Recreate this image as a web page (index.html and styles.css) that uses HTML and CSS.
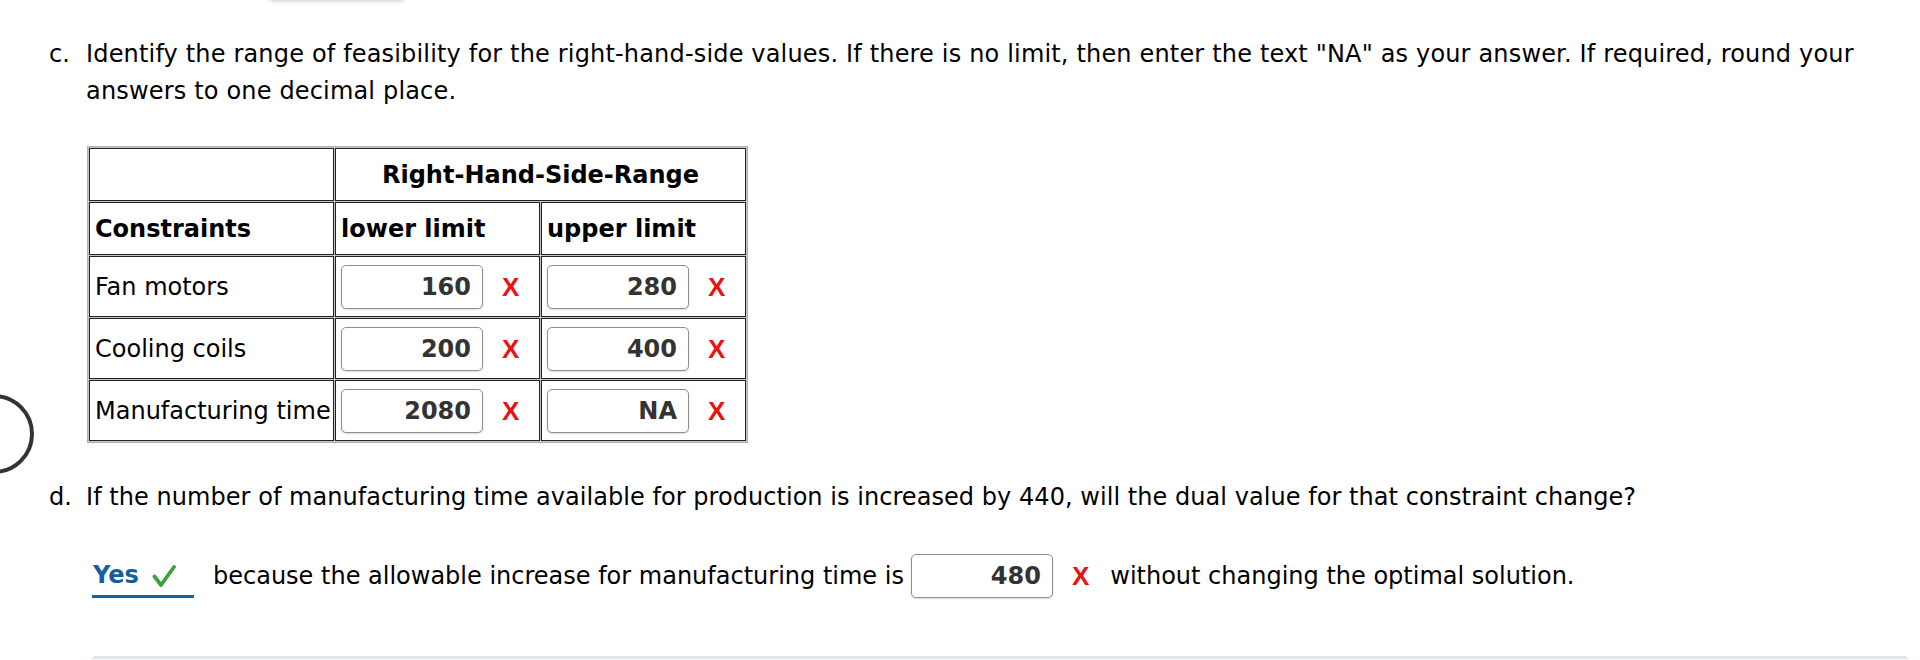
FILE: index.html
```html
<!DOCTYPE html>
<html>
<head>
<meta charset="utf-8">
<link rel="stylesheet" href="styles.css">
</head>
<body>
<div class="page">
  <div class="top-shadow"></div>
  <div class="side-circle"></div>

  <div class="q q-c">
    <div class="q-label">c.</div>
    <div class="q-body">Identify the range of feasibility for the right-hand-side values. If there is no limit, then enter the text "NA" as your answer. If required, round your answers to one decimal place.</div>
  </div>

  <div class="table-wrap">
    <table class="rhs">
      <colgroup>
        <col class="c1"><col class="c2"><col class="c3">
      </colgroup>
      <tr class="hrow">
        <td></td>
        <td colspan="2" class="center bold">Right-Hand-Side-Range</td>
      </tr>
      <tr class="hrow">
        <td class="bold">Constraints</td>
        <td class="bold">lower limit</td>
        <td class="bold">upper limit</td>
      </tr>
      <tr class="drow">
        <td>Fan motors</td>
        <td><div class="ans"><input class="box" type="text" value="160" readonly><span class="wrong">X</span></div></td>
        <td><div class="ans"><input class="box" type="text" value="280" readonly><span class="wrong">X</span></div></td>
      </tr>
      <tr class="drow">
        <td>Cooling coils</td>
        <td><div class="ans"><input class="box" type="text" value="200" readonly><span class="wrong">X</span></div></td>
        <td><div class="ans"><input class="box" type="text" value="400" readonly><span class="wrong">X</span></div></td>
      </tr>
      <tr class="drow">
        <td>Manufacturing time</td>
        <td><div class="ans"><input class="box" type="text" value="2080" readonly><span class="wrong">X</span></div></td>
        <td><div class="ans"><input class="box" type="text" value="NA" readonly><span class="wrong">X</span></div></td>
      </tr>
    </table>
  </div>

  <div class="q q-d">
    <div class="q-label">d.</div>
    <div class="q-body">If the number of manufacturing time available for production is increased by 440, will the dual value for that constraint change?</div>
  </div>

  <div class="answer-row">
    <div class="select">
      <span class="sel-text">Yes</span>
      <svg class="check" width="24" height="24" viewBox="0 0 24 24"><path d="M2.5 12.5 L9 21 L22 3" fill="none" stroke="#3f9e3f" stroke-width="3.8" stroke-linecap="round" stroke-linejoin="round"/></svg>
    </div>
    <span class="txt">because the allowable increase for manufacturing time is</span>
    <input class="box inline-box" type="text" value="480" readonly>
    <span class="wrong inline-x">X</span>
    <span class="txt">without changing the optimal solution.</span>
  </div>

  <div class="bottom-rule"></div>
</div>
</body>
</html>
```
FILE: styles.css
```css
html, body {
  margin: 0;
  padding: 0;
  background: #ffffff;
}

body {
  font-family: "DejaVu Sans", Verdana, sans-serif;
  font-size: 24px;
  color: #000;
}

.page {
  position: relative;
  height: 660px;
  box-sizing: border-box;
  padding: 36px 0 0 49px;
  overflow: hidden;
}

.top-shadow {
  position: absolute;
  left: 268px;
  top: -12px;
  width: 138px;
  height: 12px;
  background: #fff;
  border-radius: 6px;
  box-shadow: 0 1px 4px rgba(0, 0, 0, 0.22);
}

.side-circle {
  position: absolute;
  left: -46px;
  top: 394px;
  width: 72px;
  height: 72px;
  border: 4px solid #333;
  border-radius: 50%;
}

.q {
  display: flex;
  line-height: 37px;
}

.q-c .q-body {
  letter-spacing: 0.17px;
}

.q-d .q-body {
  letter-spacing: 0.05px;
}

.q-label {
  width: 37px;
  flex: none;
}

.q-body {
  width: 1800px;
}

.table-wrap {
  margin: 36px 0 0 38px;
}

.rhs {
  border: 1px solid #b0b0b0;
  background: #c6c6c6;
  border-spacing: 1px;
  table-layout: fixed;
  width: 660px;
  font-size: 24px;
}

.c1 { width: 245px; }
.c2 { width: 205px; }
.c3 { width: 205px; }

.rhs td {
  background: #fff;
  border: 1px solid #222;
  padding: 0 5px;
  box-sizing: border-box;
  white-space: nowrap;
  vertical-align: middle;
}

.rhs .hrow td { height: 53px; }
.rhs .drow td { height: 61px; padding-left: 5px; }

.bold { font-weight: bold; }
.center { text-align: center; }

.ans {
  display: flex;
  align-items: center;
}

.box {
  width: 142px;
  height: 44px;
  box-sizing: border-box;
  border: 1.5px solid #8f8f8f;
  border-radius: 5px;
  box-shadow: 0 1px 2px rgba(0, 0, 0, 0.15);
  padding: 0 11px 0 4px;
  margin: 0;
  text-align: right;
  font-family: "DejaVu Sans", Verdana, sans-serif;
  font-size: 24px;
  font-weight: bold;
  color: #333;
  background: #fff;
  outline: none;
}

.wrong {
  font-family: "Liberation Sans", Arial, sans-serif;
  font-weight: bold;
  font-size: 26px;
  color: #ee1111;
  margin-left: 19px;
  line-height: 1;
}

.q-d {
  margin-top: 36px;
}

.answer-row {
  display: flex;
  align-items: center;
  height: 44px;
  margin: 38px 0 0 43px;
  line-height: 30px;
}

.select {
  width: 102px;
  height: 44px;
  box-sizing: border-box;
  border-bottom: 3px solid #1664a0;
  display: flex;
  align-items: center;
  padding: 0 0 0 1px;
}

.sel-text {
  color: #145f9b;
  font-weight: bold;
}

.check {
  margin-left: 13px;
  margin-top: 2px;
}

.answer-row .txt:first-of-type {
  margin-left: 19px;
}

.inline-box {
  margin-left: 7px;
}

.inline-x {
  margin-left: 19px;
  margin-right: 21px;
}

.bottom-rule {
  margin: 58px 0 0 43px;
  width: 1816px;
  height: 6px;
  border-top: 3px solid #e0e6e9;
  border-radius: 4px 4px 0 0;
}
```
